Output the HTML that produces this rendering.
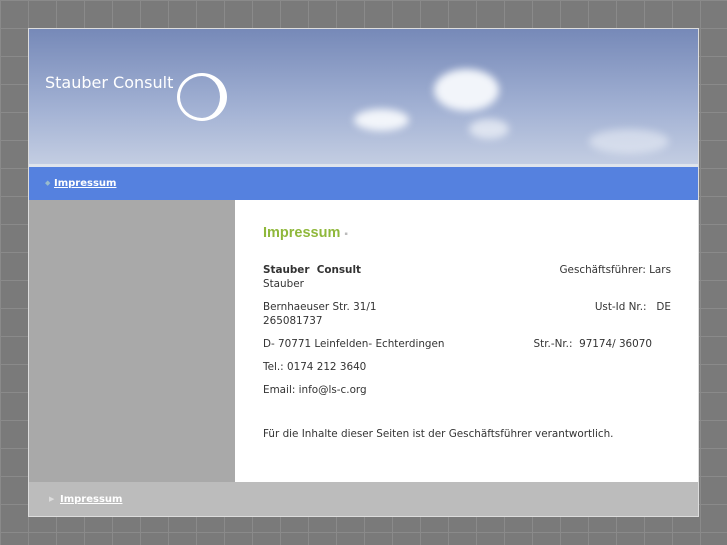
<!DOCTYPE html><html><head><style>
body{margin:0;width:727px;height:545px;overflow:hidden;background:#7a7a7a;background-image:linear-gradient(#8a8a8a 1px,transparent 1px),linear-gradient(90deg,#8a8a8a 1px,transparent 1px);background-size:28px 28px;font-family:"DejaVu Sans",sans-serif;position:relative}
#w{position:absolute;left:28px;top:28px;width:669px;height:487px;border:1px solid #ddd;background:#fff}
#h{position:absolute;left:0;top:0;width:669px;height:135px;background:linear-gradient(#7689b8,#a3b2d4 60%,#c3cde2);overflow:hidden}
.cl{position:absolute;background:#f2f5fa;border-radius:50%;filter:blur(4px)}
#logo{position:absolute;left:16px;top:44px;color:#fff;font-size:16px}
#ring{position:absolute;left:148px;top:44px;width:40px;height:42px;border:3px solid #fff;border-right-width:7px;border-radius:50%}
#sep{position:absolute;left:0;top:135px;width:669px;height:3px;background:#dfe4ec}
#nav{position:absolute;left:0;top:138px;width:669px;height:33px;background:#5581df}
a{color:#fff;font-weight:bold;font-size:10px;text-decoration:underline}
#side{position:absolute;left:0;top:171px;width:206px;height:282px;background:#a9a9a9}
#c{position:absolute;left:234px;top:196px;width:408px;font-size:10.4px;color:#333;line-height:14px}
#c p{margin:0 0 9px}
.r{float:right}
#f{position:absolute;left:0;top:453px;width:669px;height:34px;background:#bcbcbc}
</style></head><body><div id="w">
<div id="h"><div class="cl" style="left:405px;top:40px;width:65px;height:42px"></div><div class="cl" style="left:325px;top:80px;width:55px;height:22px"></div><div class="cl" style="left:440px;top:90px;width:40px;height:20px;opacity:.7"></div><div class="cl" style="left:560px;top:100px;width:80px;height:25px;opacity:.5"></div>
<div id="logo">Stauber Consult</div><div id="ring"></div></div>
<div id="sep"></div>
<div id="nav"><span style="position:absolute;left:16px;top:12px;color:#9bc;font-size:7px">◆</span><a style="position:absolute;left:25px;top:11px">Impressum</a></div>
<div id="side"></div>
<div style="position:absolute;left:234px;top:196px;font:bold 14.5px 'Liberation Sans',sans-serif;color:#8fb83b">Impressum <span style="color:#bbb;font-size:10px">▪</span></div>
<div id="c" style="top:234px">
<p><span class="r">Geschäftsführer: Lars</span><b>Stauber&nbsp; Consult</b><br>Stauber</p>
<p><span class="r">Ust-Id Nr.:&nbsp;&nbsp; DE</span>Bernhaeuser Str. 31/1<br>265081737</p>
<p><span class="r" style="margin-right:19px">Str.-Nr.:&nbsp; 97174/ 36070</span>D- 70771 Leinfelden- Echterdingen</p>
<p>Tel.: 0174 212 3640</p>
<p>Email: info@ls-c.org</p>
<p style="margin-top:30px">Für die Inhalte dieser Seiten ist der Geschäftsführer verantwortlich.</p>
</div>
<div id="f"><span style="position:absolute;left:20px;top:13px;color:#ddd;font-size:7px">▶</span><a style="position:absolute;left:31px;top:12px">Impressum</a></div>
</div></body></html>
